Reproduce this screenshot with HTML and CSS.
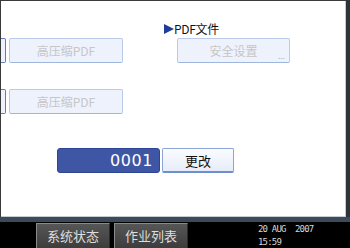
FILE: index.html
```html
<!DOCTYPE html>
<html>
<head>
<meta charset="utf-8">
<link rel="stylesheet" href="styles.css">
</head>
<body>
<div class="screen">
  <div class="main">
    <div class="label-row"><span class="arrow"></span><span class="label">PDF文件</span></div>
    <div class="row row-a">
      <div class="stub"></div>
      <div class="btn dis wide">高压缩PDF</div>
      <div class="btn dis sec">安全设置<span class="dots">...</span></div>
    </div>
    <div class="row row-b">
      <div class="stub"></div>
      <div class="btn dis wide">高压缩PDF</div>
    </div>
    <div class="row row-c">
      <div class="field">0001</div>
      <div class="btn act">更改</div>
    </div>
  </div>
  <div class="sep"></div>
  <div class="footer">
    <div class="fbtn">系统状态</div>
    <div class="fbtn">作业列表</div>
    <div class="clock">
      <div class="cl">20 AUG  2007</div>
      <div class="cl">15:59</div>
    </div>
  </div>
</div>
</body>
</html>
```
FILE: styles.css
```css
html, body {
  margin: 0;
  padding: 0;
  background: #000;
}
.screen {
  width: 350px;
  height: 248px;
  display: flex;
  flex-direction: column;
  overflow: hidden;
  font-family: "Noto Sans CJK SC", "Noto Sans", sans-serif;
}
.main {
  flex: 0 0 auto;
  box-sizing: border-box;
  height: 217px;
  background: #fff;
  border-top: 1px solid #3a3a3a;
  border-left: 1px solid #3a3a3a;
  border-right: 4px solid #2e3338;
  box-shadow: inset -1px -1px 0 #c8ccd2;
  display: flex;
  flex-direction: column;
}
.label-row {
  margin-top: 21px;
  height: 14px;
  padding-left: 163px;
  display: flex;
  align-items: center;
}
.arrow {
  width: 0;
  height: 0;
  border-left: 10px solid #1f3c98;
  border-top: 5px solid transparent;
  border-bottom: 5px solid transparent;
}
.label {
  font-size: 12px;
  line-height: 14px;
  color: #111;
  letter-spacing: -0.3px;
}
.row {
  display: flex;
  height: 25px;
  flex: 0 0 auto;
}
.row-a { margin-top: 2px; }
.row-b { margin-top: 26px; }
.row-c { margin-top: 34px; padding-left: 56px; }
.stub {
  width: 4px;
  height: 23px;
  background: #eef2fd;
  border: 1px solid #5b7cc2;
  border-left: none;
  border-radius: 0 2px 2px 0;
  margin-right: 3px;
}
.btn {
  box-sizing: border-box;
  height: 25px;
  border-radius: 2px;
  font-size: 12px;
  line-height: 23px;
  text-align: center;
  position: relative;
}
.dis {
  background: #eef2fd;
  border: 1px solid #b9cbe8;
  border-bottom-color: #9fb7df;
  color: #c6c6c6;
}
.wide { width: 114px; }
.sec { width: 113px; margin-left: 54px; }
.dots {
  position: absolute;
  right: 4px;
  bottom: 2px;
  font-size: 8px;
  line-height: 8px;
  color: #aaa;
}
.field {
  box-sizing: border-box;
  width: 103px;
  height: 25px;
  background: #3e56a3;
  border: 1px solid #2c4593;
  border-radius: 3px;
  color: #fff;
  font-family: "DejaVu Sans", sans-serif;
  font-size: 16px;
  line-height: 23px;
  text-align: right;
  padding-right: 6px;
  letter-spacing: 0.6px;
}
.act {
  width: 72px;
  margin-left: 2px;
  background: linear-gradient(#fbfcff, #e6ecf9);
  border: 1px solid #8aa6d6;
  border-bottom: 2px solid #6f8fcc;
  color: #111;
  font-size: 13px;
}
.sep {
  flex: 0 0 5px;
  background: #3d4a5a;
}
.footer {
  flex: 0 0 26px;
  box-sizing: border-box;
  background: #000;
  display: flex;
  align-items: flex-start;
  padding-top: 1px;
  padding-left: 36px;
}
.fbtn {
  box-sizing: border-box;
  width: 74px;
  height: 27px;
  margin-right: 4px;
  background: linear-gradient(#565656, #3c3c3c);
  border: 1px solid #8a8a8a;
  border-right-color: #2a2a2a;
  color: #dedede;
  font-size: 13px;
  line-height: 24px;
  text-align: center;
}
.clock {
  margin-left: 66px;
  color: #d8d8d8;
  font-family: "DejaVu Sans Mono", monospace;
  font-size: 9px;
  line-height: 13px;
  letter-spacing: -0.8px;
}
.cl {
  white-space: pre;
}
```
